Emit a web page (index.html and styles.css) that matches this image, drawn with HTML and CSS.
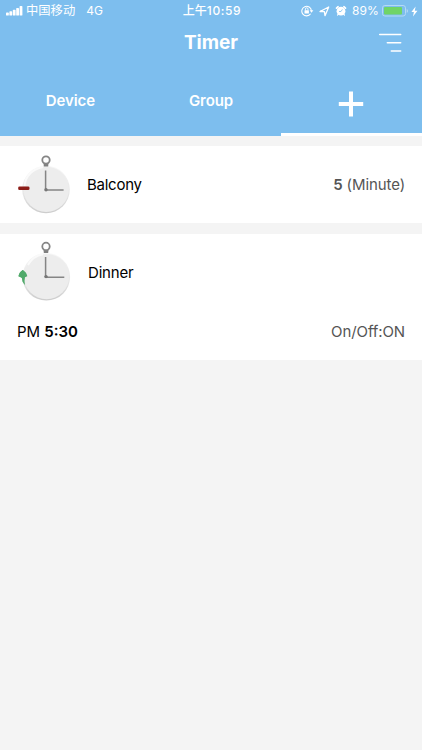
FILE: index.html
```html
<!DOCTYPE html>
<html lang="en">
<head>
<meta charset="utf-8">
<title>Timer</title>
<link rel="stylesheet" href="styles.css">
</head>
<body>
<header class="header">
  <div class="status">
    <div class="carrier">
      <svg class="signal" width="17" height="11" viewBox="0 0 17 11"><g fill="#fff"><rect y="6.6" width="2.8" height="3" rx=".7"/><rect x="3.4" y="5.3" width="2.8" height="4.3" rx=".7"/><rect x="6.8" y="3.8" width="2.8" height="5.8" rx=".7"/><rect x="10.2" y="2" width="2.8" height="7.6" rx=".7"/><rect x="13.6" y="0" width="2.8" height="9.6" rx=".7"/></g></svg>
      <span class="operator">中国移动</span><span class="network">4G</span>
    </div>
    <div class="clock">上午<span>10:59</span></div>
    <div class="indicators">
      <svg width="13" height="12" viewBox="0 0 13 12"><path d="M9.6 8.8A4.8 4.8 0 1 1 10.4 5.7" fill="none" stroke="#fff" stroke-width="1.1"/><path d="M8.6 5.3h3.8l-1.9 2.5z" fill="#fff"/><rect x="3.5" y="5.3" width="4.4" height="3.3" rx=".4" fill="#fff"/><path d="M4.4 5.4V4.1a1.3 1.3 0 0 1 2.6 0v1.3" fill="none" stroke="#fff" stroke-width=".9"/></svg>
      <svg class="location" width="11" height="11" viewBox="0 0 11 11"><path d="M1 5.5 9.7 1 6 9.7 5.4 5.7z" fill="none" stroke="#fff" stroke-width="1.3" stroke-linejoin="round"/></svg>
      <svg class="alarm" width="12" height="12" viewBox="0 0 12 12"><circle cx="6" cy="6.2" r="4.4" fill="#fff"/><path d="M1.5 3.1 3.1 1.7M8.9 1.7l1.6 1.4" stroke="#fff" stroke-width="1.7" stroke-linecap="round"/><path d="M3.1 9.4l-.6.7M8.9 9.4l.6.7" stroke="#fff" stroke-width="1.1" stroke-linecap="round"/><path d="M7.4 4.4 6 6.5H4" fill="none" stroke="#7dbeee" stroke-width=".8"/></svg>
      <span class="percent">89%</span>
      <svg class="battery" width="27" height="12" viewBox="0 0 27 12"><rect x=".5" y=".5" width="23" height="10.5" rx="2.4" fill="none" stroke="#b5daf5"/><rect x="2" y="2" width="18" height="7.5" rx="1" fill="#70d467"/><path d="M24.7 4v3.7q1.3-.4 1.3-1.8T24.7 4" fill="#b5daf5"/></svg>
      <svg class="bolt" width="7" height="11" viewBox="0 0 7 11"><path d="M4.6.5.4 6.1h2.5L2 10.5l4.5-5.8H3.8z" fill="#fff"/></svg>
    </div>
  </div>
  <div class="titlebar">
    <h1>Timer</h1>
    <svg class="menu" width="24" height="20" viewBox="0 0 24 20"><path d="M1.7 1.5h21M9.3 9.8h13.4M13.3 18h9.4" stroke="#fff" stroke-width="1.5" stroke-linecap="round"/></svg>
  </div>
  <nav class="tabs">
    <div class="tab"><span>Device</span></div>
    <div class="tab"><span>Group</span></div>
    <div class="tab active"><svg width="26" height="26" viewBox="0 0 26 26"><path d="M13 .5v25M.8 13h24.4" stroke="#fff" stroke-width="4"/></svg></div>
  </nav>
</header>
<main>
  <section class="card">
    <div class="row">
      <svg class="watch" width="60" height="66" viewBox="0 0 60 66">
        <defs><linearGradient id="rim" x1="0" y1="0" x2="0" y2="1"><stop offset="0" stop-color="#f7f7f7"/><stop offset=".6" stop-color="#e6e6e6"/><stop offset="1" stop-color="#cccccc"/></linearGradient></defs>
        <circle cx="30" cy="37.5" r="23.8" fill="url(#rim)"/><circle cx="30.2" cy="37.3" r="22.6" fill="#ededed"/><path d="M8.5 34Q10 19 27 15" fill="none" stroke="#fafafa" stroke-width="2"/>
        <path d="M27.5 10.5h5l-.3 3.9h-4.4z" fill="#808080"/><circle cx="30" cy="8" r="3.7" fill="#fff" stroke="#858585" stroke-width="1.8"/>
        <path d="M29.6 18.5v19.6h18" fill="none" stroke="#858585" stroke-width="1.5"/><circle cx="30" cy="37.7" r="1.7" fill="#777"/>
        <rect x="2.2" y="34.5" width="11.3" height="3.6" rx="1.3" fill="#8c1d18"/>
      </svg>
      <span class="name balcony">Balcony</span>
      <span class="value minutes"><b>5</b> (Minute)</span>
    </div>
  </section>
  <section class="card">
    <div class="row second">
      <svg class="watch" width="60" height="66" viewBox="0 0 60 66">
        <path d="M6.8 31Q10.5 33 11.3 37.2L9 38.3q-1 3.5 0 8-3-3.5-3.2-7.5L2.5 37.3Q3.3 33 6.8 31z" fill="#51aa6b"/>
        <circle cx="30.3" cy="37.8" r="23.8" fill="url(#rim)"/><circle cx="30.5" cy="37.6" r="22.6" fill="#ededed"/><path d="M12 26Q17 17 27 15.3" fill="none" stroke="#fafafa" stroke-width="2"/>
        <path d="M6.8 31Q10.5 33 11.3 37.2L9 38.3q-1 3.5 0 8-3-3.5-3.2-7.5L2.5 37.3Q3.3 33 6.8 31z" fill="#51aa6b"/>
        <path d="M27.5 10h5l-.3 3.9h-4.4z" fill="#808080"/><circle cx="30" cy="7.4" r="3.7" fill="#fff" stroke="#858585" stroke-width="1.8"/>
        <path d="M29.6 18v20.2h18.7" fill="none" stroke="#858585" stroke-width="1.5"/><circle cx="30" cy="37.6" r="1.7" fill="#777"/>
      </svg>
      <span class="name dinner">Dinner</span>
    </div>
    <div class="schedule"><span class="time">PM <b>5:30</b></span><span class="value state">On/Off:ON</span></div>
  </section>
</main>
</body>
</html>
```
FILE: styles.css
```css
* { box-sizing: border-box; }
body { margin: 0; min-height: 750px; background: #f4f4f4; color: #000; font-family: Inter, "Noto Sans CJK SC", sans-serif; font-size: 15px; }
svg { display: block; flex: none; }
.header { height: 136px; background: #7dbeee; color: #fff; }
.status { display: grid; grid-template-columns: 1fr auto 1fr; height: 22px; align-items: center; padding: 0 4px 0 6px; font-size: 12px; line-height: 22px; white-space: nowrap; }
.carrier, .indicators { display: flex; align-items: center; }
.signal { margin-right: 3px; }
.operator { font-size: 12.3px; }
.network { margin-left: 11px; }
.clock { font-weight: 500; }
.clock span { letter-spacing: .6px; }
.indicators { justify-content: flex-end; }
.location { margin-left: 5px; }
.alarm { margin-left: 5px; }
.percent { margin-left: 5px; letter-spacing: .1px; }
.battery { margin-left: 3px; }
.bolt { margin-left: 2px; }
.titlebar { display: grid; grid-template-columns: 1fr auto 1fr; height: 44px; align-items: center; padding: 0 20px; }
h1 { grid-column: 2; margin: 0 0 3px; font-size: 19px; line-height: 24px; font-weight: 700; }
.menu { justify-self: end; margin-bottom: 3px; }
.tabs { display: grid; grid-template-columns: repeat(3, 1fr); height: 70px; font-weight: 600; }
.tab { display: flex; align-items: center; justify-content: center; border-bottom: 3px solid transparent; padding-top: 3px; }
.tab span { line-height: 20px; margin-bottom: 1px; letter-spacing: -.1px; }
.tab.active { border-color: #fff; padding: 8px 1px 0 0; }
.card { margin-top: 10px; background: #fff; }
.card + .card { margin-top: 11px; }
.row { display: flex; align-items: center; height: 77px; padding: 0 17px 0 16px; }
.second { height: 76px; }
.name { margin-left: 11px; letter-spacing: -.2px; }
.balcony { letter-spacing: -.25px; }
.dinner { margin-left: 12px; }
.value { margin-left: auto; color: #555; letter-spacing: -.1px; }
b { font-weight: 600; }
.schedule { display: flex; align-items: center; height: 50px; padding: 0 17px 7px; line-height: 20px; }
```
